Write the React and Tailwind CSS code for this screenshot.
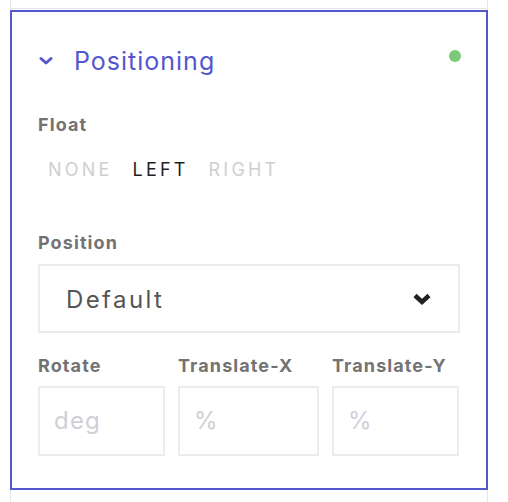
import React from "react";

const font = { fontFamily: "Inter, 'Noto Sans', sans-serif" };

function Field({ label, placeholder }) {
  return (
    <div className="flex flex-col">
      <div className="h-[22px] text-[18px] leading-[22px] font-bold text-[#737373] tracking-[1.1px] whitespace-nowrap">{label}</div>
      <div className="mt-[9px] h-[70px] border-2 border-[#ececec] flex items-center px-[14px]">
        <span className="text-[24px] text-[#cfcfd7] tracking-[1.2px]">{placeholder}</span>
      </div>
    </div>
  );
}

export default function App() {
  return (
    <div className="w-[508px] h-[502px] bg-white overflow-hidden" style={font}>
      <div className="ml-[10px] w-[478px] h-full border-x border-[#e6e6e6]">
        <div className="h-[9px] border-b border-[#e6e6e6]" />
        <div className="mt-[1px] -mx-px border-2 border-[#5457cd] px-[26px] pt-[34px] pb-[32px]">
          <div className="h-[30px] flex items-center">
            <svg width="14" height="10" viewBox="0 0 14 10" className="ml-[1px]">
              <polyline points="2,2.5 7,7 12,2.5" fill="none" stroke="#5457cd" strokeWidth="3" strokeLinecap="round" strokeLinejoin="round" />
            </svg>
            <span className="ml-[21px] text-[25px] leading-[30px] text-[#5457cd] tracking-[1px]">Positioning</span>
            <span className="ml-auto mr-[-1px] mb-[10px] w-[12px] h-[12px] rounded-full bg-[#7dc97a]" />
          </div>

          <div className="mt-[38px] h-[22px] text-[18px] leading-[22px] font-bold text-[#737373] tracking-[1.1px]">Float</div>
          <div className="mt-[23px] flex gap-[20px] pl-[10px] text-[18px] leading-[22px] tracking-[3.2px]">
            <span className="text-[#cfcfcf]">NONE</span>
            <span className="text-[#1f1f1f]">LEFT</span>
            <span className="text-[#cfcfcf]">RIGHT</span>
          </div>

          <div className="mt-[51px] h-[22px] text-[18px] leading-[22px] font-bold text-[#737373] tracking-[1.1px]">Position</div>
          <div className="mt-[10px] h-[69px] border-2 border-[#ececec] flex items-center pl-[26px] pr-[26px]">
            <span className="text-[24px] text-[#555555] tracking-[2.4px] pt-[2px]">Default</span>
            <svg width="20" height="14" viewBox="0 0 20 14" className="ml-auto">
              <polyline points="3,3.5 10,10 17,3.5" fill="none" stroke="#222222" strokeWidth="4.5" strokeLinecap="butt" strokeLinejoin="miter" />
            </svg>
          </div>

          <div className="mt-[22px] grid grid-cols-[127px_141px_127px] gap-x-[13px]">
            <Field label="Rotate" placeholder="deg" />
            <Field label="Translate-X" placeholder="%" />
            <Field label="Translate-Y" placeholder="%" />
          </div>
        </div>
      </div>
    </div>
  );
}
